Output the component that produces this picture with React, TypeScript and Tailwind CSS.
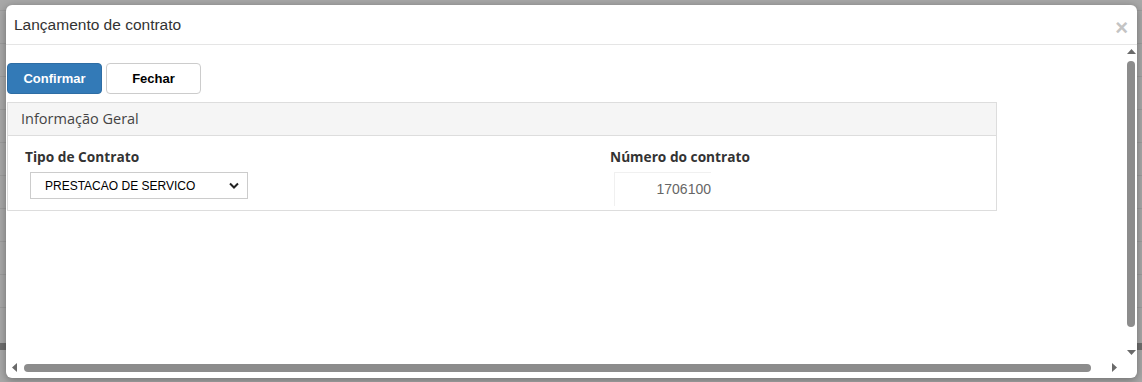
import React from 'react';

// linhas da tabela que ficam atrás do overlay
const bgRows = [10, 43, 76, 109, 142, 175, 208, 241, 274, 307];

const App = () => {
  return (
    <div className="relative w-[1142px] h-[382px] overflow-hidden bg-[#a8a8a8] font-['Liberation_Sans',Arial,sans-serif]">
      {/* fundo */}
      {bgRows.map((top) => (
        <div key={top} className="absolute left-0 right-0 h-px bg-[#9c9c9c]" style={{ top }} />
      ))}
      <div className="absolute left-0 right-0 top-[343px] h-[7px] bg-[#6e6e6e]" />

      {/* modal */}
      <div className="relative ml-[6px] mt-[5px] w-[1131px] h-[373px] rounded-[6px] bg-white shadow-[0_2px_8px_rgba(0,0,0,0.35)] flex flex-col overflow-hidden">
        {/* header */}
        <div className="h-[40px] shrink-0 border-b border-[#e5e5e5] flex items-center justify-between pl-[8px] pr-[9px]">
          <span className="text-[15.5px] text-[#333]">Lançamento de contrato</span>
          <span className="text-[22px] leading-none font-bold text-[#c4c4c4] mt-[6px]">×</span>
        </div>

        {/* corpo com scroll */}
        <div className="flex-1 flex min-h-0">
          <div className="flex-1 pt-[18px] pl-px">
            <div className="flex gap-[4px]">
              <button className="w-[95px] h-[31px] rounded-[4px] bg-[#337ab7] border border-[#2e6da4] text-white text-[13px] font-bold">
                Confirmar
              </button>
              <button className="w-[95px] h-[31px] rounded-[4px] bg-white border border-[#ccc] text-black text-[13px] font-bold">
                Fechar
              </button>
            </div>

            <div className="mt-[8px] w-[990px] border border-[#ddd]">
              <div className="h-[33px] bg-[#f5f5f5] border-b border-[#ddd] flex items-center pl-[13px] text-[14.5px] text-[#444] font-['Open_Sans',sans-serif]">
                Informação Geral
              </div>
              <div className="h-[74px] flex">
                <div className="w-[585px] pl-[17px] pt-[12px]">
                  <div className="text-[13.7px] font-bold text-[#333] font-['Open_Sans',sans-serif] leading-[18px]">Tipo de Contrato</div>
                  <div className="mt-[6px] ml-[5px] w-[218px] h-[27px] border border-[#ccc] flex items-center justify-between pl-[14px] pr-[8px]">
                    <span className="text-[12px] text-black">PRESTACAO DE SERVICO</span>
                    <svg width="10" height="7" viewBox="0 0 10 7">
                      <path d="M1 1.5 L5 5.5 L9 1.5" fill="none" stroke="#222" strokeWidth="2" />
                    </svg>
                  </div>
                </div>
                <div className="pt-[12px] pl-[17px]">
                  <div className="text-[13.7px] font-bold text-[#333] font-['Open_Sans',sans-serif] leading-[18px]">Número do contrato</div>
                  <div className="mt-[6px] ml-[4px] w-[97px] h-[34px] border-t border-l border-[#f0f0f0] flex items-center justify-end text-[14px] text-[#666]">
                    1706100
                  </div>
                </div>
              </div>
            </div>
          </div>

          {/* scrollbar vertical */}
          <div className="w-[12px] shrink-0 flex flex-col items-center pt-[4px] pb-[6px]">
            <svg width="9" height="5" viewBox="0 0 9 5"><path d="M0 5 L4.5 0 L9 5 Z" fill="#6a6a6a" /></svg>
            <div className="mt-[7px] w-[8px] h-[266px] rounded-full bg-[#8c8c8c]" />
            <div className="flex-1" />
            <svg width="9" height="5" viewBox="0 0 9 5"><path d="M0 0 L4.5 5 L9 0 Z" fill="#6a6a6a" /></svg>
          </div>
        </div>

        {/* scrollbar horizontal */}
        <div className="h-[17px] shrink-0 flex items-center pl-[6px] pr-[20px] pb-[4px]">
          <svg width="5" height="9" viewBox="0 0 5 9"><path d="M5 0 L0 4.5 L5 9 Z" fill="#6a6a6a" /></svg>
          <div className="ml-[7px] w-[1067px] h-[8px] rounded-full bg-[#8c8c8c]" />
          <div className="flex-1" />
          <svg width="5" height="9" viewBox="0 0 5 9"><path d="M0 0 L5 4.5 L0 9 Z" fill="#6a6a6a" /></svg>
        </div>
      </div>
    </div>
  );
};

export default App;
